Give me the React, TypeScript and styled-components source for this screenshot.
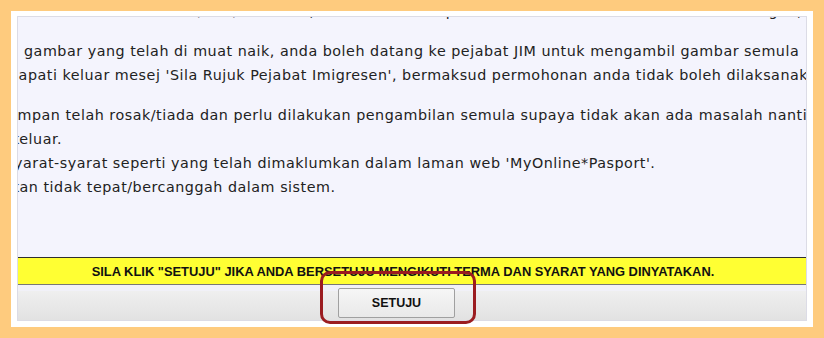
import React from "react"
import styled, { createGlobalStyle } from "styled-components"

const GlobalStyle = createGlobalStyle`
  html, body {
    margin: 0;
    padding: 0;
    background: #fecb7e;
  }
  body {
    font-family: "DejaVu Sans", Verdana, sans-serif;
  }
`

const Page = styled.div`
  padding: 11px;
  height: 338px;
  box-sizing: border-box;
  overflow: hidden;
`

const Card = styled.div`
  position: relative;
  width: 802px;
  height: 316px;
  box-sizing: border-box;
  padding: 5px 6px 6px 6px;
  background: #ffffff;

  &::before,
  &::after {
    content: "";
    position: absolute;
    z-index: -1;
    width: 45%;
    height: 45%;
  }
  &::before {
    top: 0;
    left: 0;
    box-shadow: -3px -3px 5px rgba(120, 72, 10, 0.45);
  }
  &::after {
    right: 0;
    bottom: 0;
    box-shadow: 3px 3px 6px rgba(120, 72, 10, 0.45);
  }
`

const Panel = styled.div`
  height: 100%;
  box-sizing: border-box;
  border: 1px solid #dcdce6;
  display: flex;
  flex-direction: column;
  background: #f4f4fd;
`

const TextArea = styled.div`
  flex: 1;
  overflow: hidden;
  color: #222222;
  font-size: 14.3px;
  letter-spacing: 0.52px;
  line-height: 24px;
`

const TextScroll = styled.div`
  margin-top: -18px;
`

const Para = styled.div`
  margin: 0 0 16px 0;
`

const Line = styled.div<{ $indent: number }>`
  white-space: nowrap;
  text-indent: ${(p) => p.$indent}px;
`

const Notice = styled.div`
  height: 26px;
  border-top: 1px solid #2e2e2e;
  border-bottom: 1px solid #777777;
  background: #ffff33;
  display: flex;
  align-items: center;
  justify-content: center;
  padding-right: 18px;
  font-family: "Liberation Sans", Arial, sans-serif;
  font-weight: bold;
  font-size: 12.9px;
  color: #111111;
  white-space: nowrap;
`

const ButtonBar = styled.div`
  height: 35px;
  box-sizing: border-box;
  display: flex;
  align-items: flex-start;
  justify-content: center;
  padding: 3px 31px 0 0;
  background: linear-gradient(#f1f1f8 0, #f1f1f8 6px, #efefef 6px, #e2e2e2 100%);
`

const ButtonWrap = styled.div`
  position: relative;
`

const Highlight = styled.div`
  position: absolute;
  left: -18px;
  right: -21px;
  top: -17px;
  bottom: -6px;
  border: 3px solid #9b1c20;
  border-radius: 10px;
  pointer-events: none;
`

const AgreeButton = styled.button`
  width: 117px;
  height: 30px;
  border: 1px solid #a0a0a0;
  border-radius: 2px;
  background: linear-gradient(#f6f6f6, #e9e9e9);
  font-family: "Liberation Sans", Arial, sans-serif;
  font-weight: bold;
  font-size: 12.5px;
  color: #111111;
  cursor: pointer;
`

const paragraphs: { text: string; indent: number }[][] = [
  [
    {
      text: "Sila bawalah dokumen (asal) bersama, dan serahkan kepada kaunter untuk semakan oleh kakitangan, manakala dokumen lain tidak akan diterima.",
      indent: 0,
    },
  ],
  [
    {
      text: "gambar yang telah di muat naik, anda boleh datang ke pejabat JIM untuk mengambil gambar semula",
      indent: 6,
    },
    {
      text: "dapati keluar mesej 'Sila Rujuk Pejabat Imigresen', bermaksud permohonan anda tidak boleh dilaksanakan secara dalam talian.",
      indent: -9,
    },
  ],
  [
    {
      text: "impan telah rosak/tiada dan perlu dilakukan pengambilan semula supaya tidak akan ada masalah nanti semasa pasport",
      indent: -5,
    },
    { text: "keluar.", indent: -7 },
    {
      text: "yarat-syarat seperti yang telah dimaklumkan dalam laman web 'MyOnline*Pasport'.",
      indent: -4,
    },
    { text: "kan tidak tepat/bercanggah dalam sistem.", indent: -7 },
  ],
]

export default function App() {
  return (
    <>
      <GlobalStyle />
      <Page>
        <Card>
          <Panel>
            <TextArea>
              <TextScroll>
                {paragraphs.map((lines, i) => (
                  <Para key={i}>
                    {lines.map((l, j) => (
                      <Line key={j} $indent={l.indent}>
                        {l.text}
                      </Line>
                    ))}
                  </Para>
                ))}
              </TextScroll>
            </TextArea>
            <Notice>SILA KLIK "SETUJU" JIKA ANDA BERSETUJU MENGIKUTI TERMA DAN SYARAT YANG DINYATAKAN.</Notice>
            <ButtonBar>
              <ButtonWrap>
                <AgreeButton type="button">SETUJU</AgreeButton>
                <Highlight />
              </ButtonWrap>
            </ButtonBar>
          </Panel>
        </Card>
      </Page>
    </>
  )
}
